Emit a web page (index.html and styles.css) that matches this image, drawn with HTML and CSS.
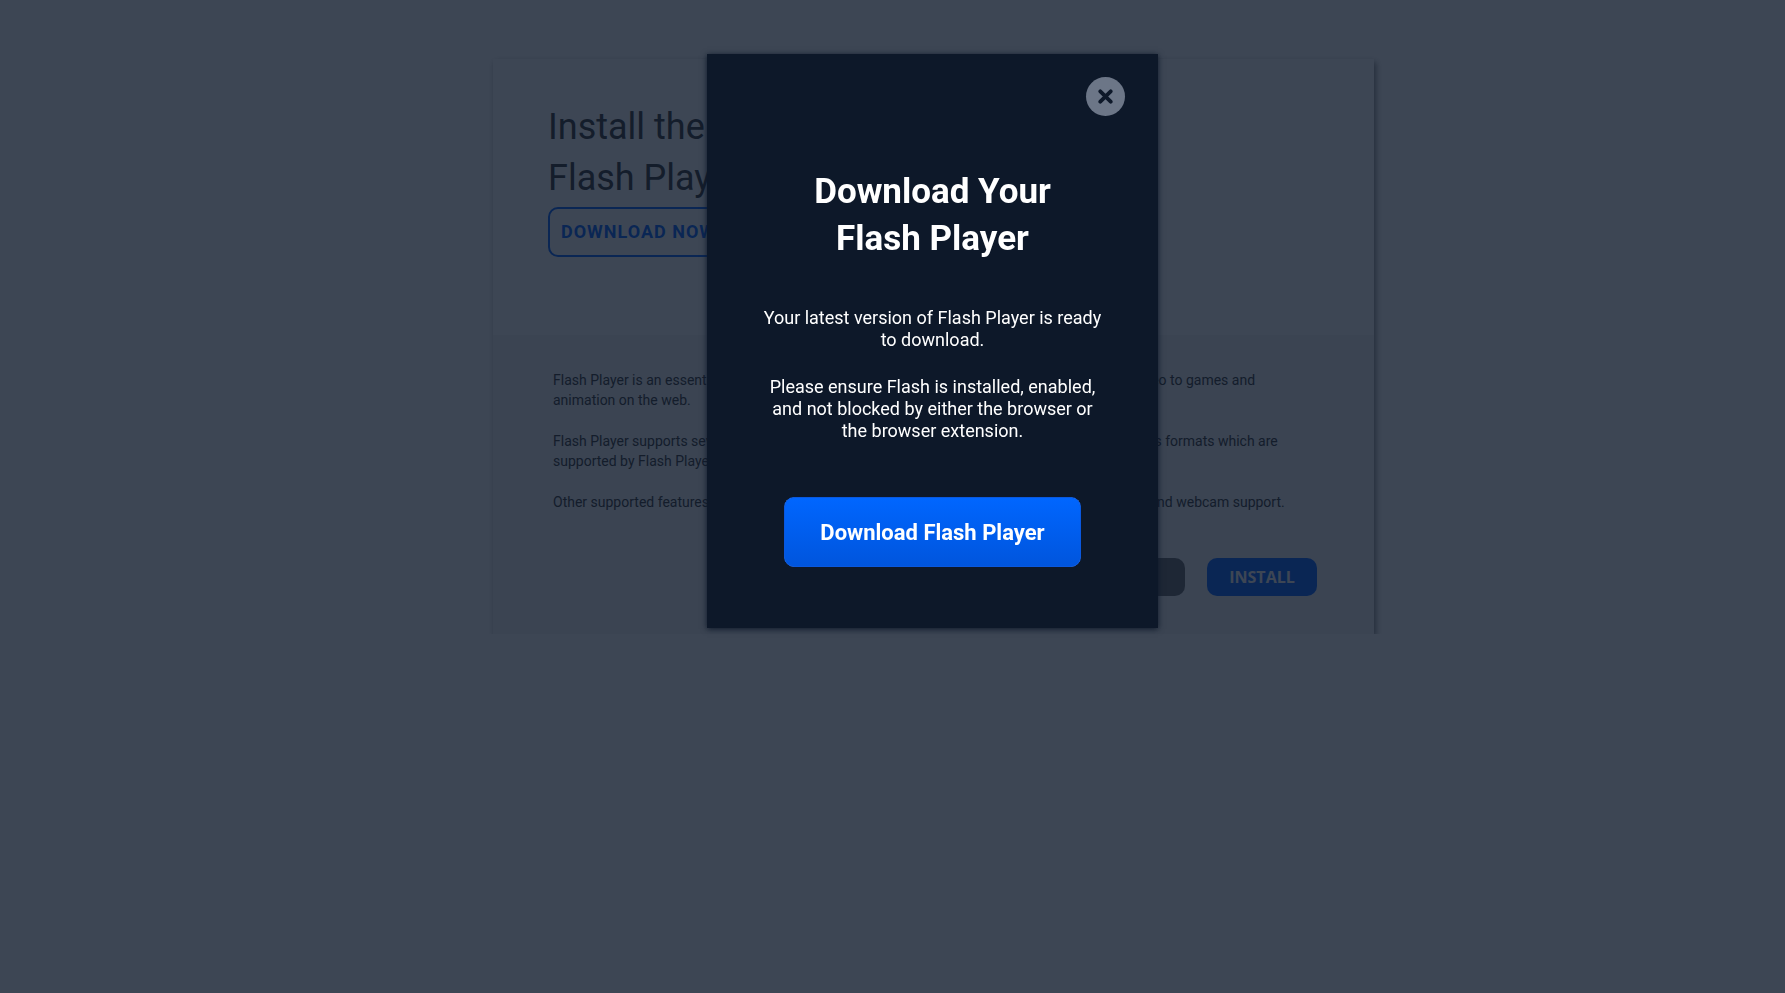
FILE: index.html
```
<!DOCTYPE html>
<html lang="en">
<head>
    <meta charset="UTF-8">
    <meta name="viewport" content="width=device-width, initial-scale=1.0">
    <title>Flash Player</title>
    <link rel="stylesheet" href="styles.css">
</head>
<body>
    <main class="card">
        <section class="intro">
            <h1>Install the latest<br>Flash Player</h1>
            <a class="download-now" href="#">DOWNLOAD NOW</a>
        </section>
        <section class="details">
            <p>Flash Player is an essential plug-in for your browser which allows you to view everything from video to games and animation on the web.</p>
            <p>Flash Player supports several common audio/video formats and there are also many other various formats which are supported by Flash Player.</p>
            <p>Other supported features include full screen mode, hardware graphics acceleration, microphone and webcam support.</p>
            <div class="actions">
                <button type="button" class="later">LATER</button>
                <button type="button" class="install">INSTALL</button>
            </div>
        </section>
    </main>

    <div class="overlay">
        <div class="modal" role="dialog" aria-labelledby="modal-title">
            <button type="button" class="close" aria-label="Close">
                <svg width="15" height="15" viewBox="0 0 15 15"><path d="M2.3 2.3l10.4 10.4M12.7 2.3l-10.4 10.4" stroke="#0d1829" stroke-width="3.8" stroke-linecap="round"/></svg>
            </button>
            <h2 id="modal-title">Download Your<br>Flash Player</h2>
            <p>Your latest version of Flash Player is ready to download.</p>
            <p>Please ensure Flash is installed, enabled, and not blocked by either the browser or the browser extension.</p>
            <button type="button" class="download">Download Flash Player</button>
        </div>
    </div>
</body>
</html>
```
FILE: styles.css
```
* { box-sizing: border-box; }
body {
    margin: 0;
    padding: 59px 0 0 82px;
    background-color: #ffffff;
    font-family: Roboto, sans-serif;
    color: #333333;
}
button { border: none; font-family: inherit; cursor: pointer; }

/* Page card */
.card {
    max-width: 881px;
    margin: 0 auto;
    background-color: #ffffff;
    box-shadow: 2px 3px 6px rgba(0, 0, 0, 0.5);
}
.intro { padding: 43px 55px 78px; }
.intro h1 {
    margin: 0;
    font-size: 36px;
    font-weight: 400;
    line-height: 51px;
}
.download-now {
    display: inline-block;
    margin-top: 3px;
    padding: 0 11px;
    border: 2px solid #0060ff;
    border-radius: 10px;
    color: #0060ff;
    font-size: 18px;
    font-weight: 700;
    line-height: 46px;
    letter-spacing: 1px;
    text-decoration: none;
}
.details {
    padding: 35px 57px 38px 60px;
    background-color: #f2f2f2;
}
.details p {
    margin: 0 27px 21px 0;
    font-size: 14px;
    line-height: 20px;
}
.actions {
    display: flex;
    justify-content: flex-end;
    gap: 22px;
    margin-top: 46px;
}
.actions button {
    width: 110px;
    height: 38px;
    border-radius: 10px;
    color: #ffffff;
    font-family: "Open Sans", sans-serif;
    font-size: 16px;
    font-weight: 700;
}
.later { background-color: #666666; }
.install { background-color: #0060ff; }

/* Popup */
.overlay {
    position: fixed;
    inset: 0;
    padding: 54px 0 0 80px;
    background-color: rgba(13, 24, 41, 0.8);
}
.modal {
    position: relative;
    max-width: 451px;
    margin: 0 auto;
    padding: 114px 56px 61px;
    background-color: #0d1829;
    box-shadow: 0 1px 6px #0d1829;
    color: #ffffff;
    text-align: center;
}
.modal h2 {
    margin: 0 0 45px;
    font-size: 35px;
    line-height: 47px;
}
.modal p {
    margin: 0 0 25px;
    font-size: 18px;
    line-height: 22px;
}
.close {
    position: absolute;
    top: 23px;
    right: 33px;
    display: flex;
    align-items: center;
    justify-content: center;
    width: 39px;
    height: 39px;
    padding: 0;
    border-radius: 50%;
    background-color: #6c7687;
}
.download {
    width: 297px;
    height: 70px;
    margin-top: 30px;
    border: 1px solid #0a58de;
    border-radius: 10px;
    background-image: linear-gradient(#0066ff, #0055dd);
    color: #ffffff;
    font-size: 22px;
    font-weight: 700;
}
```
